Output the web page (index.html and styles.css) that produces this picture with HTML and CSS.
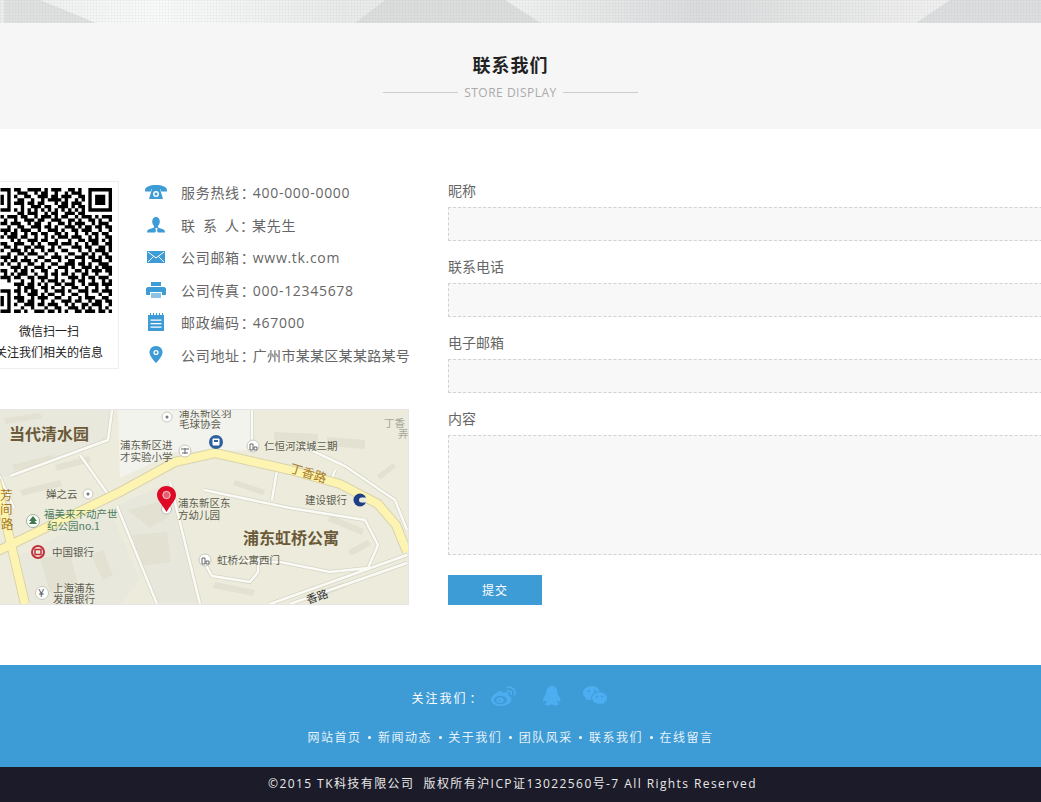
FILE: index.html
```html
<!doctype html>
<html lang="zh-CN">
<head>
<meta charset="utf-8">
<title>联系我们</title>
<link rel="stylesheet" href="styles.css">
</head>

<body>
<!-- top banner strip -->
<div class="banner">
	<svg width="1041" height="23" viewBox="0 0 1041 23">
		<defs>
			<linearGradient id="bannerBg">
				<stop offset="0" stop-color="#eceded"/>
				<stop offset="0.15" stop-color="#f9fafa"/>
				<stop offset="0.33" stop-color="#e9eaea"/>
				<stop offset="0.5" stop-color="#eff0f0"/>
				<stop offset="0.67" stop-color="#dadcdd"/>
				<stop offset="0.8" stop-color="#e6e7e7"/>
				<stop offset="0.9" stop-color="#f0f0f0"/>
				<stop offset="1" stop-color="#e6e6e6"/>
			</linearGradient>
			<pattern id="bannerWeave" width="3" height="3" patternUnits="userSpaceOnUse">
				<rect width="1" height="3" fill="#888" opacity="0.06"/>
				<rect width="3" height="1" fill="#888" opacity="0.06"/>
			</pattern>
		</defs>
		<rect width="1041" height="23" fill="url(#bannerBg)"/>
		<polygon points="4,0 40,0 96,23 4,23" fill="#dfe0e0"/>
		<polygon points="385,0 505,0 541,23 355,23" fill="#dcdddd"/>
		<polygon points="950,0 1041,0 1041,23 916,23" fill="#dddedf"/>
		<rect width="1041" height="23" fill="url(#bannerWeave)"/>
	</svg>
</div>

<div class="sec-head">
	<div class="inner">
		<h2>联系我们</h2>
		<div class="sub"><i></i><span>STORE DISPLAY</span><i></i></div>
	</div>
</div>

<div class="main">
	<div class="left">
		<div class="top-row">
			<div class="qr-box">
				<svg class="qr" width="125" height="125" viewBox="0 0 37 37">
					<path fill="none" stroke="#000" stroke-width="1" d="M4 .5h3M8 .5h2M12 .5h4M17 .5h1M19 .5h3M24 .5h2M27 .5h1M30 .5h7M6 1.5h1M9 1.5h3M14 1.5h1M16 1.5h2M20 1.5h1M23 1.5h1M25 1.5h3M30 1.5h1M36 1.5h1M4 2.5h1M6 2.5h1M8 2.5h1M11 2.5h2M15 2.5h3M19 2.5h2M22 2.5h3M27 2.5h2M30 2.5h1M32 2.5h3M36 2.5h1M4 3.5h1M6 3.5h1M9 3.5h2M13 3.5h1M16 3.5h1M18 3.5h4M23 3.5h1M26 3.5h1M28 3.5h1M30 3.5h1M32 3.5h3M36 3.5h1M4 4.5h1M6 4.5h1M8 4.5h3M12 4.5h2M15 4.5h2M20 4.5h1M22 4.5h2M25 4.5h3M30 4.5h1M32 4.5h3M36 4.5h1M6 5.5h1M10 5.5h1M13 5.5h3M17 5.5h2M21 5.5h3M25 5.5h1M27 5.5h2M30 5.5h1M36 5.5h1M4 6.5h3M8 6.5h1M10 6.5h1M12 6.5h1M14 6.5h1M16 6.5h1M18 6.5h1M20 6.5h1M22 6.5h1M24 6.5h1M26 6.5h1M28 6.5h1M30 6.5h7M9 7.5h2M12 7.5h3M17 7.5h1M19 7.5h2M23 7.5h3M27 7.5h2M4 8.5h1M6 8.5h3M10 8.5h2M14 8.5h1M16 8.5h3M20 8.5h1M22 8.5h2M26 8.5h1M28 8.5h3M32 8.5h1M34 8.5h3M5 9.5h1M8 9.5h1M11 9.5h3M15 9.5h2M19 9.5h3M24 9.5h2M27 9.5h1M30 9.5h2M33 9.5h1M36 9.5h1M4 10.5h2M7 10.5h3M12 10.5h1M14 10.5h2M18 10.5h1M21 10.5h2M24 10.5h1M26 10.5h3M31 10.5h1M33 10.5h3M6 11.5h1M9 11.5h2M13 11.5h3M17 11.5h2M20 11.5h1M23 11.5h3M27 11.5h1M29 11.5h2M32 11.5h2M35 11.5h2M4 12.5h3M8 12.5h1M10 12.5h3M15 12.5h1M18 12.5h3M22 12.5h1M25 12.5h2M28 12.5h3M33 12.5h1M36 12.5h1M5 13.5h1M7 13.5h2M11 13.5h1M13 13.5h2M16 13.5h2M20 13.5h2M23 13.5h1M26 13.5h1M29 13.5h1M31 13.5h2M34 13.5h2M4 14.5h1M6 14.5h3M10 14.5h2M14 14.5h1M17 14.5h1M19 14.5h1M21 14.5h3M25 14.5h3M30 14.5h1M32 14.5h1M35 14.5h2M7 15.5h1M9 15.5h1M12 15.5h3M16 15.5h2M20 15.5h1M24 15.5h1M27 15.5h2M30 15.5h3M34 15.5h1M36 15.5h1M4 16.5h2M8 16.5h3M13 16.5h1M15 16.5h1M18 16.5h3M22 16.5h3M26 16.5h1M29 16.5h1M31 16.5h2M35 16.5h2M5 17.5h2M8 17.5h1M11 17.5h2M14 17.5h3M19 17.5h1M21 17.5h1M25 17.5h3M29 17.5h2M33 17.5h2M36 17.5h1M4 18.5h1M7 18.5h3M11 18.5h1M13 18.5h1M16 18.5h1M18 18.5h2M22 18.5h2M27 18.5h1M30 18.5h1M32 18.5h3M36 18.5h1M6 19.5h1M9 19.5h2M12 19.5h3M17 19.5h1M20 19.5h1M24 19.5h2M28 19.5h2M31 19.5h1M34 19.5h2M4 20.5h3M8 20.5h1M11 20.5h1M15 20.5h2M19 20.5h3M23 20.5h1M26 20.5h3M30 20.5h2M33 20.5h1M35 20.5h2M5 21.5h1M7 21.5h2M10 21.5h3M14 21.5h1M17 21.5h2M21 21.5h1M24 21.5h2M28 21.5h1M31 21.5h3M36 21.5h1M4 22.5h1M6 22.5h1M9 22.5h1M12 22.5h2M16 22.5h1M19 22.5h2M23 22.5h3M27 22.5h2M30 22.5h1M33 22.5h2M35 22.5h1M7 23.5h3M11 23.5h1M14 23.5h3M18 23.5h1M21 23.5h3M25 23.5h1M28 23.5h3M32 23.5h1M34 23.5h3M4 24.5h2M8 24.5h1M10 24.5h2M13 24.5h1M16 24.5h2M20 24.5h1M23 24.5h1M26 24.5h2M29 24.5h1M31 24.5h3M35 24.5h2M5 25.5h1M7 25.5h1M9 25.5h3M14 25.5h1M17 25.5h1M19 25.5h2M22 25.5h2M25 25.5h1M28 25.5h2M32 25.5h1M36 25.5h1M4 26.5h3M8 26.5h2M12 26.5h2M15 26.5h3M20 26.5h1M24 26.5h3M28 26.5h1M30 26.5h2M33 26.5h3M6 27.5h1M10 27.5h1M13 27.5h1M16 27.5h1M18 27.5h3M22 27.5h1M25 27.5h1M27 27.5h2M31 27.5h1M34 27.5h1M36 27.5h1M8 28.5h3M12 28.5h2M15 28.5h1M17 28.5h1M20 28.5h2M23 28.5h3M28 28.5h1M30 28.5h3M34 28.5h3M9 29.5h1M11 29.5h3M16 29.5h2M19 29.5h1M22 29.5h1M25 29.5h2M29 29.5h1M32 29.5h1M35 29.5h1M4 30.5h3M8 30.5h2M11 30.5h1M13 30.5h2M17 30.5h1M20 30.5h3M24 30.5h1M27 30.5h3M31 30.5h2M34 30.5h3M6 31.5h1M9 31.5h1M12 31.5h3M16 31.5h1M18 31.5h2M22 31.5h1M25 31.5h2M29 31.5h1M33 31.5h1M36 31.5h1M4 32.5h1M6 32.5h1M8 32.5h3M13 32.5h1M15 32.5h3M20 32.5h2M24 32.5h1M27 32.5h1M29 32.5h3M34 32.5h2M4 33.5h1M6 33.5h1M9 33.5h2M12 33.5h2M16 33.5h1M19 33.5h1M22 33.5h3M26 33.5h2M30 33.5h1M32 33.5h2M35 33.5h2M4 34.5h1M6 34.5h1M8 34.5h1M11 34.5h3M15 34.5h2M18 34.5h3M23 34.5h1M25 34.5h1M28 34.5h2M31 34.5h3M36 34.5h1M6 35.5h1M10 35.5h1M13 35.5h1M17 35.5h1M20 35.5h2M24 35.5h3M28 35.5h1M30 35.5h1M33 35.5h1M35 35.5h1M4 36.5h3M8 36.5h2M11 36.5h1M14 36.5h3M18 36.5h2M21 36.5h1M23 36.5h1M26 36.5h2M29 36.5h3M33 36.5h2M36 36.5h1"/>
				</svg>
				<p>微信扫一扫</p>
				<p>关注我们相关的信息</p>
			</div>
			<ul class="info">
				<li>
					<svg class="ico" width="22" height="22" viewBox="0 0 22 22"><path d="M0 9c0-3 5-5 11-5s11 2 11 5v1.500h-6V8.500H6v2H0z"/><path d="M7 8h8l3 10H4z"/><circle cx="11" cy="13" r="3" fill="#fff"/><circle cx="11" cy="13" r="1.500"/></svg>
					<span>服务热线<b>：</b>400-000-0000</span>
				</li>
				<li>
					<svg class="ico" width="22" height="22" viewBox="0 0 22 22"><path d="M11 3c2.300 0 3.800 2 3.800 4.500 0 2-1 3.500-1.800 4.500v1.500l5.500 2c1 .5 1.500 1.500 1.500 3h-7l-1-1.500.6-3h-2.200l.6 3-1 1.500H2c0-1.500.5-2.500 1.500-3l5.500-2V12c-.8-1-1.800-2.500-1.800-4.500C7.200 5 8.700 3 11 3z"/></svg>
					<span><em>联 系 人</em><b>：</b>某先生</span>
				</li>
				<li>
					<svg class="ico" width="22" height="22" viewBox="0 0 22 22"><rect x="2" y="5" width="18" height="12"/><path d="M3 6l8 6 8-6M3 16l5.500-5.500M19 16l-5.500-5.500" fill="none" stroke="#fff"/></svg>
					<span>公司邮箱<b>：</b>www.tk.com</span>
				</li>
				<li>
					<svg class="ico" width="22" height="22" viewBox="0 0 22 22"><path d="M6 3h10v4H6z"/><path d="M3 8h16c1 0 2 1 2 2v5c0 1-1 1-2 1h-2v-3H5v3H3c-1 0-2 0-2-1v-5c0-1 1-2 2-2z"/><path d="M6 14h10v5H6z" fill="#8fc3e6"/></svg>
					<span>公司传真<b>：</b>000-12345678</span>
				</li>
				<li>
					<svg class="ico" width="22" height="22" viewBox="0 0 22 22"><path d="M3 4h16v16H3z"/><path d="M5 2h1v3H5zM8 2h1v3H8zM11 2h1v3h-1zM14 2h1v3h-1zM17 2h1v3h-1z"/><path d="M5.500 8.500h11v1.200h-11zM5.500 12h11v1.200h-11zM5.500 15.500h11v1.200h-11z" fill="#fff"/></svg>
					<span>邮政编码<b>：</b>467000</span>
				</li>
				<li>
					<svg class="ico" width="22" height="22" viewBox="0 0 22 22"><path d="M11 2c3.800 0 6.500 2.800 6.500 6.300C17.500 12 13.500 16.500 11 19c-2.500-2.500-6.500-7-6.500-10.700C4.500 4.800 7.200 2 11 2z"/><circle cx="11" cy="8.500" r="2.600" fill="#fff"/><circle cx="11" cy="8.500" r="1.300"/></svg>
					<span>公司地址<b>：</b><u>广州市某某区某某路某号</u></span>
				</li>
			</ul>
		</div>

		<!-- map, coordinates are page coordinates -->
		<div class="map">
			<svg width="429" height="194" viewBox="-21 410 429 194">
				<rect x="-21" y="410" width="429" height="194" fill="#edecdc"/>
				<path d="M-21 410H112L108 440 10 476-21 480zM10 560l100-50 30 70-20 24H30z" fill="#e9e8dc"/>
				<path d="M118 410H250V450L175 452 120 478z" fill="#f3f3ee"/>
				<path d="M118 505l50-22 30 120h-42z" fill="#e8e7dc"/>
				<g fill="#e2e1d2">
					<path d="M4 418l36-5 2 5-36 6zM12 465l40-10 3 5-40 11zM55 465l34-9 2 6-34 9zM20 490l40-10 2 6-40 10zM128 510l30-8 12 14-20 12zM132 535l35-3 4 30-28 4zM103 550l10 25-10 5-12-25zM40 558l30-4 8 30-28 8z"/>
					<path d="M274 432l44 2v8l-44-2zM327 437l38 3v9l-38-3zM377 475l16-12 3 4-16 13zM235 480l30 10-2 5-30-10zM330 515l34 14-2 6-34-14zM348 550l20-10 3 5-20 11zM215 582l40 8-2 6-40-8zM320 590l24-8 3 5-24 9z"/>
				</g>
				<g fill="none" stroke="#d6d4c6" stroke-width="4">
					<path d="M-21 432L14 508M112 410L108 440 10 476M80 455L112 500M117 506L157 604M170 482L200 604M204 490L290 508 365 520 378 545 368 568 330 572 280 562 218 560M204 562L212 576 250 582 258 572V556M252 410V450M277 470L272 500M335 470L331 482M300 445L345 466 395 500 407 530M270 604L407 555M290 604L407 563"/>
				</g>
				<g fill="none" stroke="#fbfbf6" stroke-width="2.500">
					<path d="M-21 432L14 508M112 410L108 440 10 476M80 455L112 500M117 506L157 604M170 482L200 604M204 490L290 508 365 520 378 545 368 568 330 572 280 562 218 560M204 562L212 576 250 582 258 572V556M252 410V450M277 470L272 500M335 470L331 482M300 445L345 466 395 500 407 530M270 604L407 555M290 604L407 563"/>
				</g>
				<g fill="none" stroke-linejoin="round">
					<path d="M-21 560L120 492 175 462 215 453 290 470 340 484 378 504 396 525 407 552M-4 480L25 604" stroke="#d8d3ae" stroke-width="10"/>
					<path d="M-21 560L120 492 175 462 215 453 290 470 340 484 378 504 396 525 407 552M-4 480L25 604" stroke="#fdf4b2" stroke-width="8"/>
				</g>
				<g class="poi-text">
					<text class="big" x="9" y="440">当代清水园</text>
					<text class="big" x="243" y="544">浦东虹桥公寓</text>
					<text x="179" y="417">浦东新区羽</text>
					<text x="179" y="428">毛球协会</text>
					<text x="120" y="449">浦东新区进</text>
					<text x="120" y="461">才实验小学</text>
					<text x="264" y="450">仁恒河滨城三期</text>
					<text class="faint" x="384" y="427">丁香</text>
					<text class="faint" x="398" y="438">弄</text>
					<text x="46" y="498">婵之云</text>
					<text class="green" x="44" y="518">福美来不动产世</text>
					<text class="green" x="47" y="530">纪公园no.1</text>
					<text x="52" y="556">中国银行</text>
					<text x="53" y="592">上海浦东</text>
					<text x="53" y="603">发展银行</text>
					<text x="178" y="507">浦东新区东</text>
					<text x="178" y="519">方幼儿园</text>
					<text x="305" y="504">建设银行</text>
					<text x="217" y="564">虹桥公寓西门</text>
					<text class="road" x="0" y="500">芳</text>
					<text class="road" x="0" y="514">间</text>
					<text class="road" x="1" y="529">路</text>
					<text class="road" transform="translate(289 472) rotate(17)">丁香路</text>
					<text class="dark" transform="translate(308 604) rotate(-19)">香路</text>
				</g>
				<g>
					<circle cx="167" cy="417" r="5" fill="#fff" stroke="#c8c8bc"/><circle cx="167" cy="417" r="1.500" fill="#777"/>
					<circle cx="88" cy="494" r="5" fill="#fff" stroke="#c8c8bc"/><circle cx="88" cy="494" r="1.500" fill="#777"/>
					<circle cx="185" cy="451" r="6" fill="#fff" stroke="#c8c8bc"/><path d="M181 449h8M182 453h6M185 448v6" stroke="#666" fill="none"/>
					<circle cx="216" cy="442" r="7" fill="#2f5f9e"/><rect x="212.500" y="438.500" width="7" height="7" rx="1" fill="#fff"/><rect x="214" y="440" width="4" height="2" fill="#2f5f9e"/>
					<circle cx="253" cy="446" r="6" fill="#fff" stroke="#c8c8bc"/><path d="M250 450v-6h3v6zM254 450v-3h3v3z" fill="none" stroke="#666"/>
					<circle cx="205" cy="560" r="6" fill="#fff" stroke="#c8c8bc"/><path d="M202 564v-6h3v6zM206 564v-3h3v3z" fill="none" stroke="#666"/>
					<circle cx="33" cy="521" r="6.500" fill="#fff" stroke="#9db39a"/><path d="M33 516l4 5h-2.500l2.500 3h-8l2.500-3H29z" fill="#3f7a4c"/>
					<circle cx="38" cy="552" r="6" fill="none" stroke="#c4303a" stroke-width="2"/><rect x="35" y="549.500" width="6" height="5" fill="none" stroke="#c4303a" stroke-width="1.500"/>
					<circle cx="42" cy="593" r="6.500" fill="#fff" stroke="#c8c8bc"/><text class="yen" x="38.500" y="597">¥</text>
					<circle cx="360" cy="500" r="6.500" fill="#1c3f86"/><circle cx="361.500" cy="500" r="2.500" fill="#edecdc"/><path d="M362 497.500h5v5h-5z" fill="#edecdc"/>
					<circle cx="166.500" cy="509" r="5" fill="#fff" stroke="#bbb"/>
					<path d="M166.500 486c5.500 0 9.500 4 9.500 9 0 5-5.500 10-9.500 17-4-7-9.500-12-9.500-17 0-5 4-9 9.500-9z" fill="#de0a25"/>
					<circle cx="166.500" cy="495" r="3.700" fill="#e8606e" stroke="#f6c9ce" stroke-width="1"/>
				</g>
			</svg>
		</div>
	</div>

	<form class="msg-form">
		<label>昵称</label>
		<input type="text">
		<label>联系电话</label>
		<input type="text">
		<label>电子邮箱</label>
		<input type="text">
		<label>内容</label>
		<textarea></textarea>
		<button type="button">提交</button>
	</form>
</div>

<div class="foot">
	<div class="inner">
		<div class="follow">
			<span>关注我们<b>：</b></span>
			<svg class="weibo" width="26" height="20" viewBox="0 0 26 20"><path d="M10 5c-5 1-10 5-10 9 0 3.500 4.500 6 9.500 6 6.500 0 11-3.500 11-7 0-2-1.500-2.700-3-3 .6-1.500.3-3-1-3.500-1.500-.6-3.500 0-5 1 .3-1.500 0-3-1.500-2.500z"/><ellipse cx="9.500" cy="14" rx="6.500" ry="4.300" fill="#3d9bd5"/><ellipse cx="9" cy="14.200" rx="3.600" ry="2.800"/><circle cx="8.300" cy="14.500" r="1.100" fill="#3d9bd5"/><path d="M16 1.500c4.500-1.500 9 2 7.800 7.500M16.500 5c2.500-.7 4.500 1 3.800 3.500" fill="none" stroke="#4caef0" stroke-width="1.600" stroke-linecap="round"/></svg>
			<svg class="qq" width="20" height="20" viewBox="0 0 20 20"><path d="M10 0c4 0 5.500 3 5.500 6.500 0 .5 0 1 .2 1.500 1 1.500 2.800 4.500 2.800 6.500 0 1-.5 1.500-1 1.200-.5-.2-1-.8-1.300-1.400-.3.900-.7 1.700-1.400 2.400.8.300 2 .8 2 1.500 0 1-2 1.300-3.500 1.300-1.500 0-2.600-.5-3.300-1.200h-.4c-.7.700-1.800 1.200-3.300 1.200-1.500 0-3.500-.3-3.500-1.300 0-.7 1.200-1.200 2-1.500-.7-.7-1.100-1.500-1.400-2.400-.3.600-.8 1.200-1.300 1.400-.5.300-1-.2-1-1.200 0-2 1.800-5 2.800-6.500.2-.5.2-1 .2-1.500C4.500 3 6 0 10 0z"/></svg>
			<svg class="wechat" width="24" height="20" viewBox="0 0 24 20"><path d="M9 0C4 0 0 3 0 7c0 2.300 1.300 4.200 3.300 5.500L2.500 15l3-1.600c1 .3 2 .5 3.100.5-.2-.6-.3-1.300-.3-1.900 0-3.700 3.500-6.500 7.800-6.500h.7C15.900 2.300 12.800 0 9 0z"/><path d="M24 12c0-3.300-3.300-5.800-7.500-5.800S9 8.700 9 12s3.300 5.800 7.500 5.800c.9 0 1.700-.1 2.500-.4l2.600 1.500-.7-2.300C22.700 15.500 24 13.900 24 12z"/><circle cx="6" cy="5" r="1.100" fill="#3d9bd5"/><circle cx="12" cy="5" r="1.100" fill="#3d9bd5"/><circle cx="13.800" cy="10.500" r=".9" fill="#3d9bd5"/><circle cx="19" cy="10.500" r=".9" fill="#3d9bd5"/></svg>
		</div>
		<ul class="nav">
			<li>网站首页</li>
			<li>新闻动态</li>
			<li>关于我们</li>
			<li>团队风采</li>
			<li>联系我们</li>
			<li>在线留言</li>
		</ul>
	</div>
</div>
<div class="copy">
	<div class="inner">©2015 TK科技有限公司&nbsp;&nbsp;版权所有沪ICP证13022560号-7 All Rights Reserved</div>
</div>
</body>
</html>
```

FILE: styles.css
```css
* {margin:0; padding:0; list-style:none; box-sizing:border-box;}

html, body {height:802px; overflow:hidden;}
body {background:#fff; font-family:"Open Sans","Noto Sans CJK SC",sans-serif; font-size:14px; color:#666;}

/* the original page centres on 1021px, wider than that the bars just carry on */
.inner {width:1021px; text-align:center;}

.banner {height:23px;}
.banner svg {display:block;}

.sec-head {height:106px; background:#f6f6f6; padding-top:30px;}
.sec-head h2 {font-size:18px; line-height:24px; letter-spacing:1px; font-weight:700; color:#222;}
.sub {display:flex; justify-content:center; align-items:center; gap:6px; height:20px; margin-top:5px; font-size:12px; letter-spacing:.5px; color:#aaa;}
.sub i {display:block; width:75px; height:1px; background:#ccc;}

.main {display:flex; gap:39px; width:1300px; margin-left:-21px; padding:52px 0 60px;}

.left {width:430px; flex:none;}
.top-row {display:flex; gap:26px; height:188px;}

.qr-box {width:140px; height:188px; flex:none; border:1px solid #eee; text-align:center; padding-top:6px; font-size:12px; line-height:21px; color:#222; white-space:nowrap;}
.qr {display:block; margin:0 auto 8px;}

.info {margin-top:-5.400px; flex:none;}
.info li {display:flex; align-items:center; gap:14px; height:32.6px; white-space:nowrap; letter-spacing:.7px;}
.ico {flex:none; fill:#3d9bd5;}
.info b {font-family:"Noto Sans CJK TC",sans-serif; font-weight:400; margin:0 -2px 0 1px; letter-spacing:0;}
.info em {display:inline-block; width:58px; font-style:normal; text-align:justify; text-align-last:justify; letter-spacing:0;}
.info u {text-decoration:none; letter-spacing:.3px;}

.map {width:430px; height:196px; margin-top:40px; border:1px solid #e5e5e5; border-left:0; overflow:hidden;}
.map svg {display:block;}
.poi-text text {font-family:"Noto Sans CJK SC",sans-serif; font-size:10.5px; fill:#5c5c50;}
.poi-text .big {font-size:16px; font-weight:700; fill:#6b5a3a;}
.poi-text .green {fill:#4e7d60;}
.poi-text .faint {fill:#a8a89a;}
.poi-text .road {font-size:12.5px; fill:#a87a20;}
.poi-text .dark {font-size:11px; fill:#333;}
.yen {font-family:"Liberation Sans",sans-serif; font-size:10px; fill:#555;}

.msg-form {display:flex; flex-direction:column; width:720px; flex:none; align-items:flex-start;}
.msg-form label {display:block; height:20px; line-height:20px; margin-bottom:6px; color:#666;}
.msg-form input, .msg-form textarea {display:block; width:100%; height:34px; margin-bottom:16px; background:#f8f8f8; border:1px dashed #d2d2d2; outline:none; resize:none;}
.msg-form textarea {height:120px; margin-bottom:20px;}
.msg-form button {width:94px; height:30px; border:0; background:#3d9bd5; color:#fff; font-family:inherit; font-size:12px; letter-spacing:1px;}

.foot {height:102px; background:#3d9bd5; padding-top:21px; color:#fff; font-size:12px;}
.follow {display:flex; justify-content:center; align-items:center; height:20px; padding-right:3px; letter-spacing:2px;}
.follow span {padding-top:3px;}
.follow b {font-family:"Noto Sans CJK TC",sans-serif; font-weight:400; margin-left:2px;}
.follow svg {display:block; fill:#4caef0;}
.weibo {margin-left:7px;}
.qq {margin-left:25px;}
.wechat {margin-left:21px;}
.nav {display:flex; justify-content:center; margin-top:22px; line-height:20px; letter-spacing:1.5px; color:#e6f2fa;}
.nav li {white-space:nowrap;}
.nav li + li::before {content:""; display:inline-block; width:3px; height:3px; margin:0 6.700px 3px 6.700px; border-radius:50%; background:#fff; vertical-align:middle;}

.copy {height:35px; background:#1c1b29; color:#e8e8e8; font-size:12px; line-height:33px; letter-spacing:1.420px;}
.copy .inner {padding-left:4px;}
```
